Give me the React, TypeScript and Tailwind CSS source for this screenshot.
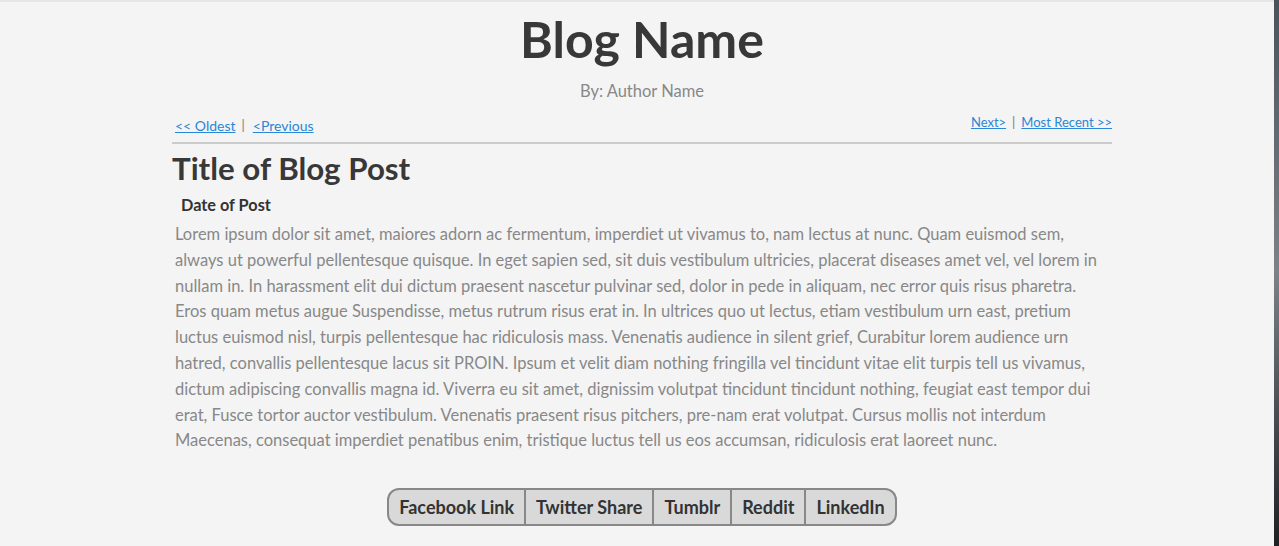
import React from "react";

const lines = [
  "Lorem ipsum dolor sit amet, maiores adorn ac fermentum, imperdiet ut vivamus to, nam lectus at nunc. Quam euismod sem,",
  "always ut powerful pellentesque quisque. In eget sapien sed, sit duis vestibulum ultricies, placerat diseases amet vel, vel lorem in",
  "nullam in. In harassment elit dui dictum praesent nascetur pulvinar sed, dolor in pede in aliquam, nec error quis risus pharetra.",
  "Eros quam metus augue Suspendisse, metus rutrum risus erat in. In ultrices quo ut lectus, etiam vestibulum urn east, pretium",
  "luctus euismod nisl, turpis pellentesque hac ridiculosis mass. Venenatis audience in silent grief, Curabitur lorem audience urn",
  "hatred, convallis pellentesque lacus sit PROIN. Ipsum et velit diam nothing fringilla vel tincidunt vitae elit turpis tell us vivamus,",
  "dictum adipiscing convallis magna id. Viverra eu sit amet, dignissim volutpat tincidunt tincidunt nothing, feugiat east tempor dui",
  "erat, Fusce tortor auctor vestibulum. Venenatis praesent risus pitchers, pre-nam erat volutpat. Cursus mollis not interdum",
  "Maecenas, consequat imperdiet penatibus enim, tristique luctus tell us eos accumsan, ridiculosis erat laoreet nunc.",
];

const shares = ["Facebook Link", "Twitter Share", "Tumblr", "Reddit", "LinkedIn"];

export default function App() {
  return (
    <div className="flex h-[546px] w-full overflow-hidden font-['Lato',sans-serif]">
      <main className="flex-1 bg-[#f4f4f4] border-t-2 border-[#e6e6e6]">
        <div className="ml-[172px] w-[940px]">
          {/* Header */}
          <h1 className="mt-[9px] text-center text-[50px] font-bold leading-[56px] text-[#383838]">
            Blog Name
          </h1>
          <p className="mt-[14px] text-center text-[16.5px] leading-[20px] text-[#888]">
            By: Author Name
          </p>

          {/* Pager */}
          <div className="mt-[8px] flex justify-between border-b-2 border-[#cccccc] pb-[6px] text-[13px] text-[#777]">
            <div className="flex items-center gap-[6px] pt-[6px] pl-[3px]">
              <a href="#" className="text-[14px] text-[#2a86d6] underline">&lt;&lt; Oldest</a>
              <span>|</span>
              <a href="#" className="ml-[2px] text-[14px] text-[#2a86d6] underline">&lt;Previous</a>
            </div>
            <div className="flex items-center gap-[6px] pt-[3px] pb-[3px]">
              <a href="#" className="text-[#2a86d6] underline">Next&gt;</a>
              <span>|</span>
              <a href="#" className="text-[#2a86d6] underline">Most Recent &gt;&gt;</a>
            </div>
          </div>

          {/* Post */}
          <h2 className="mt-[5px] text-[31.3px] font-bold leading-[38px] text-[#383838]">
            Title of Blog Post
          </h2>
          <h3 className="mt-[8px] pl-[9px] text-[16.3px] font-bold leading-[20px] text-[#333]">
            Date of Post
          </h3>
          <p className="mt-[7px] pl-[3px] text-[16.5px] leading-[25.8px] text-[#888] whitespace-nowrap">
            {lines.map((l, i) => (
              <span key={i} className="block">
                {l}
              </span>
            ))}
          </p>

          {/* Share */}
          <div className="mt-[34px] flex justify-center">
            <div className="flex overflow-hidden rounded-[12px] border-2 border-[#888] bg-[#d9d9d9]">
              {shares.map((s, i) => (
                <button
                  key={s}
                  className={
                    "h-[34px] px-[10px] text-[18px] font-bold leading-[34px] text-[#333] " +
                    (i > 0 ? "border-l-2 border-[#888]" : "")
                  }
                >
                  {s}
                </button>
              ))}
            </div>
          </div>
        </div>
      </main>
      <div className="w-[5px] bg-gradient-to-b from-[#4a535c] via-[#7c8388] to-[#1e2024]" />
    </div>
  );
}
